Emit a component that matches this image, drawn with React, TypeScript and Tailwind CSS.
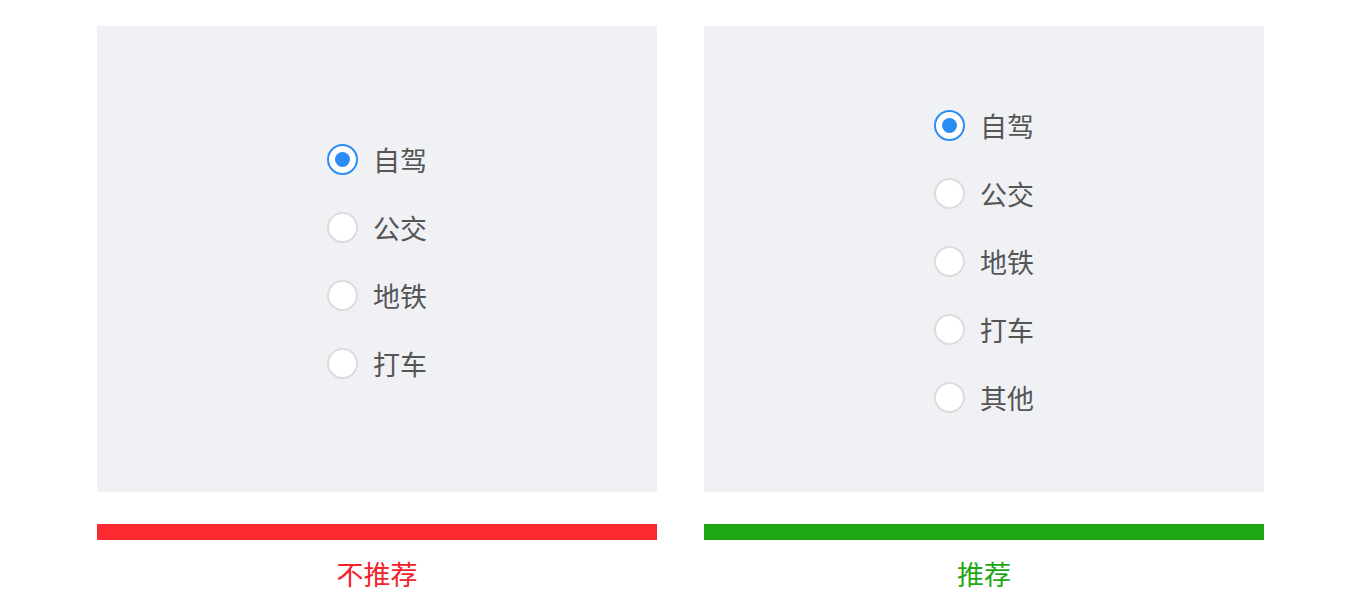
const font = { fontFamily: '"Noto Sans CJK SC", "Noto Sans", sans-serif' };

const Radio = ({ label, checked }: { label: string; checked?: boolean }) => (
  <div className="flex h-[68px] items-center gap-[15px]">
    {checked ? (
      <span className="flex h-[31px] w-[31px] items-center justify-center rounded-full border-2 border-[#2b8cf4] bg-white">
        <span className="h-[15px] w-[15px] rounded-full bg-[#2b8cf4]" />
      </span>
    ) : (
      <span className="h-[31px] w-[31px] rounded-full border-2 border-[#dcdcdc] bg-white" />
    )}
    <span className="text-[27px] leading-none text-[#555555]">{label}</span>
  </div>
);

const Card = ({ items, bar, labelColor, label }: { items: string[]; bar: string; labelColor: string; label: string }) => (
  <div className="flex w-[560px] flex-col">
    <div className="flex h-[466px] flex-col items-center justify-center bg-[#f0f1f5] pt-[4px]">
      <div className="flex flex-col">
        {items.map((t, i) => (
          <Radio key={t} label={t} checked={i === 0} />
        ))}
      </div>
    </div>
    <div className={`mt-[32px] h-[16px] ${bar}`} />
    <div className={`mt-[16px] text-center text-[27px] leading-[36px] ${labelColor}`}>{label}</div>
  </div>
);

export default function App() {
  return (
    <div className="flex h-[600px] w-[1361px] justify-center gap-[47px] bg-white pt-[26px]" style={font}>
      <Card items={["自驾", "公交", "地铁", "打车"]} bar="bg-[#fc2a31]" labelColor="text-[#f2232b]" label="不推荐" />
      <Card items={["自驾", "公交", "地铁", "打车", "其他"]} bar="bg-[#1ea815]" labelColor="text-[#1ea815]" label="推荐" />
    </div>
  );
}
